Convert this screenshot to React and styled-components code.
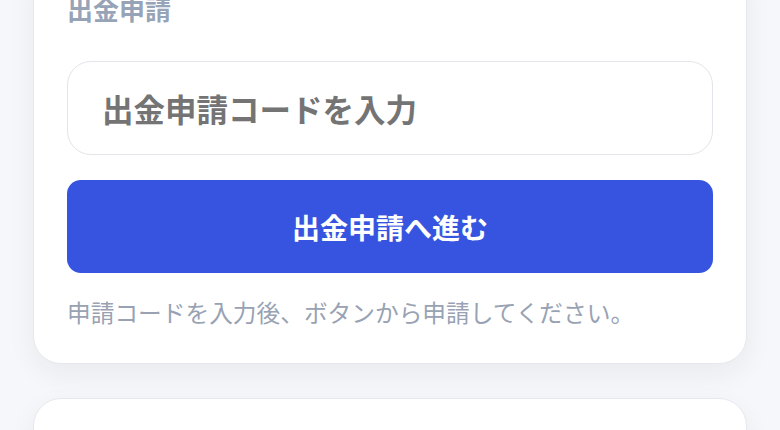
import React from "react";
import styled, { createGlobalStyle } from "styled-components";

const GlobalStyle = createGlobalStyle`
  html, body {
    margin: 0;
    padding: 0;
    background: #f5f7fa;
    font-family: "Noto Sans CJK JP", "Noto Sans", sans-serif;
  }
  * {
    box-sizing: border-box;
  }
`;

const Page = styled.div`
  display: flex;
  flex-direction: column;
  gap: 34px;
  padding: 0 33px 40px;
  overflow: hidden;
  height: 430px;
`;

const Card = styled.section`
  display: flex;
  flex-direction: column;
  padding: 33px 33px 33px;
  background: #ffffff;
  border: 1px solid #e6e8ee;
  border-radius: 28px;
  box-shadow: 0 10px 28px rgba(30, 41, 59, 0.06);
  &.scrolled {
    margin-top: -43px;
  }
  &.next {
    min-height: 140px;
    flex-shrink: 0;
  }
`;

const Label = styled.div`
  font-size: 26px;
  line-height: 36px;
  font-weight: 700;
  color: #97a3b6;
  margin-bottom: 34px;
`;

const CodeInput = styled.input`
  width: 100%;
  height: 94px;
  padding: 0 34px;
  border: 1px solid #e3e5ea;
  border-radius: 24px;
  background: #ffffff;
  font-family: inherit;
  font-size: 31.5px;
  font-weight: 700;
  color: #333;
  outline: none;
  &::placeholder {
    color: #747474;
    opacity: 1;
  }
`;

const SubmitButton = styled.button`
  margin-top: 25px;
  height: 93px;
  border: none;
  border-radius: 14px;
  background: #3654e0;
  color: #ffffff;
  font-family: inherit;
  font-size: 28px;
  font-weight: 700;
  cursor: pointer;
`;

const Hint = styled.p`
  margin: 21px 0 0;
  font-size: 23.7px;
  line-height: 36px;
  color: #98a2b3;
  white-space: nowrap;
`;

export default function App() {
  return (
    <>
      <GlobalStyle />
      <Page>
        <Card className="scrolled">
          <Label>出金申請</Label>
          <CodeInput placeholder="出金申請コードを入力" />
          <SubmitButton>出金申請へ進む</SubmitButton>
          <Hint>申請コードを入力後、ボタンから申請してください。</Hint>
        </Card>
        <Card className="next" />
      </Page>
    </>
  );
}
